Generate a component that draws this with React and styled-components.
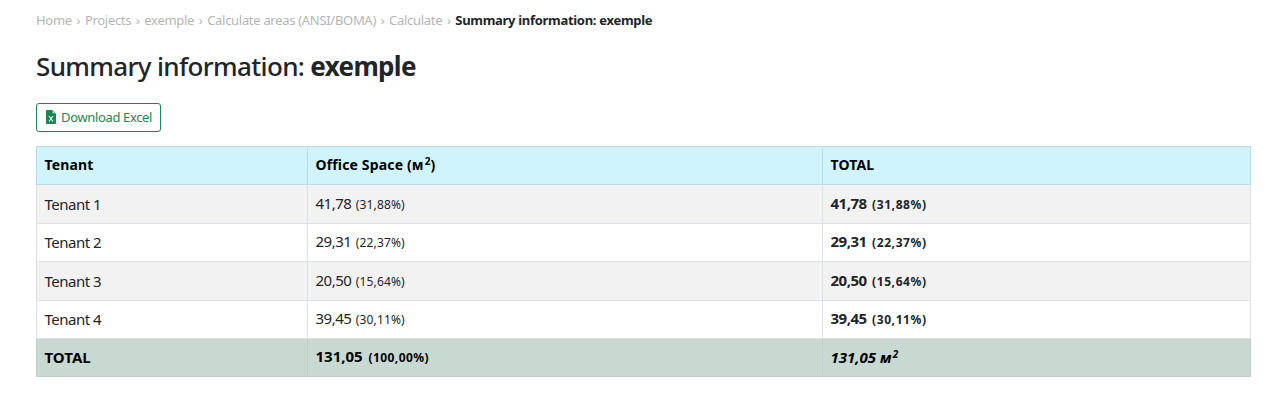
import styled, { createGlobalStyle } from 'styled-components';

const GlobalStyle = createGlobalStyle`
    body {
        margin: 0;
        background: #fff;
        color: #212529;
        font-family: "Noto Sans", "Open Sans", sans-serif;
        font-size: 15px;
        line-height: 1.5;
    }
`

const crumbs = ['Home', 'Projects', 'exemple', 'Calculate areas (ANSI/BOMA)', 'Calculate'];

const rows = [
    { name: 'Tenant 1', area: '41,78', share: '(31,88%)' },
    { name: 'Tenant 2', area: '29,31', share: '(22,37%)' },
    { name: 'Tenant 3', area: '20,50', share: '(15,64%)' },
    { name: 'Tenant 4', area: '39,45', share: '(30,11%)' },
];

const App = () => {
    return (
        <Page>
            <GlobalStyle />
            <Breadcrumb>
                {crumbs.map(c => (
                    <Crumb key={c}>{c}<Separator>›</Separator></Crumb>
                ))}
                <CurrentCrumb>Summary information: exemple</CurrentCrumb>
            </Breadcrumb>
            <Title>Summary information: <strong>exemple</strong></Title>
            <DownloadButton>
                <svg width="10" height="14" viewBox="0 0 10 14">
                    <path d="M1 0h5.5L10 3.5V13a1 1 0 0 1-1 1H1a1 1 0 0 1-1-1V1a1 1 0 0 1 1-1z" fill="#198754" />
                    <path d="M6.5 0L10 3.5H7.2a.7.7 0 0 1-.7-.7z" fill="#9fd1b8" />
                    <path d="M3 6l4 5.5M7 6l-4 5.5" stroke="#fff" strokeWidth="1.1" />
                </svg>
                Download Excel
            </DownloadButton>
            <Table>
                <colgroup>
                    <col width="271" />
                    <col width="515" />
                    <col />
                </colgroup>
                <thead>
                    <HeadRow>
                        <th>Tenant</th>
                        <th>Office Space (м<sup>2</sup>)</th>
                        <th>TOTAL</th>
                    </HeadRow>
                </thead>
                <tbody>
                    {rows.map(r => (
                        <BodyRow key={r.name}>
                            <td>{r.name}</td>
                            <td>{r.area} <small>{r.share}</small></td>
                            <TotalCell>{r.area} <small>{r.share}</small></TotalCell>
                        </BodyRow>
                    ))}
                </tbody>
                <tfoot>
                    <FootRow>
                        <td>TOTAL</td>
                        <td>131,05 <small>(100,00%)</small></td>
                        <td><em>131,05 м<sup>2</sup></em></td>
                    </FootRow>
                </tfoot>
            </Table>
        </Page>
    );
}

const Page = styled.div`
    padding: 10px 22px 30px 36px;
`

const Breadcrumb = styled.nav`
    display: flex;
    font-size: 13px;
    line-height: 20px;
    letter-spacing: -0.3px;
    color: #b5b5b5;
    white-space: nowrap;
`

const Crumb = styled.span``

const Separator = styled.span`
    margin: 0 4.7px;
`

const CurrentCrumb = styled.span`
    color: #212529;
    font-weight: 700;
`

const Title = styled.h1`
    margin: 20px 0 21px;
    font-size: 26px;
    line-height: 32px;
    font-weight: 500;
    letter-spacing: -0.66px;
    strong {
        font-weight: 700;
    }
`

const DownloadButton = styled.button`
    display: flex;
    align-items: center;
    gap: 5px;
    height: 29px;
    padding: 0 8px 1px 9px;
    border: 1px solid #198754;
    border-radius: 3px;
    background: #fff;
    color: #198754;
    font-family: inherit;
    font-size: 13px;
    letter-spacing: -0.35px;
    margin-bottom: 14px;
`

const Table = styled.table`
    width: 1215px;
    table-layout: fixed;
    border-collapse: collapse;
    font-size: 15px;
    font-weight: 400;
    letter-spacing: -0.5px;

    th, td {
        height: 38.4px;
        box-sizing: border-box;
        padding: 0 7.5px;
        text-align: left;
        border: 1px solid #dee2e6;
        line-height: 22.5px;
    }
    small {
        margin-left: 1px;
        font-size: 12px;
        letter-spacing: 0.15px;
    }
    sup {
        margin-left: 1px;
        font-size: 10px;
        line-height: 0;
        vertical-align: 5px;
    }
`

const HeadRow = styled.tr`
    background: #cff4fc;
    color: #000;
    th {
        font-size: 14px;
        letter-spacing: 0.15px;
        border-color: #badce3;
    }
`

const BodyRow = styled.tr`
    &:nth-child(odd) {
        background: #f2f2f2;
    }
`

const TotalCell = styled.td`
    font-weight: 700;
    small {
        margin-left: 2px;
        letter-spacing: 0.6px;
    }
`

const FootRow = styled.tr`
    background: #c8d9d1;
    color: #000;
    font-weight: 700;
    letter-spacing: 0;
    td {
        border-color: #bfcfc8;
    }
    small {
        margin-left: 2px;
        letter-spacing: 0.4px;
    }
`

export default App;
